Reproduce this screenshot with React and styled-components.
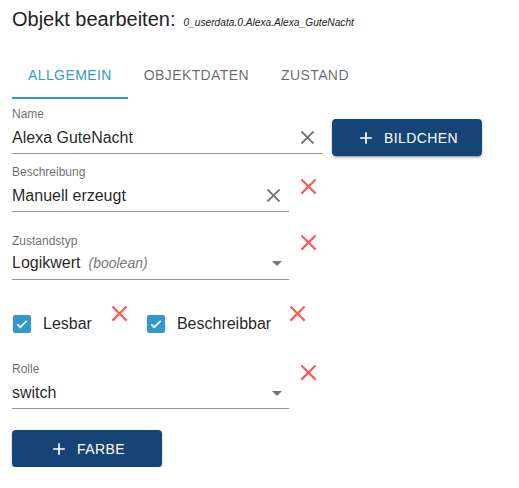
import React from 'react';
import styled, { createGlobalStyle } from 'styled-components';

const GlobalStyle = createGlobalStyle`
    html, body {
        margin: 0;
        padding: 0;
        background: #fff;
    }
    body {
        font-family: "Liberation Sans", Arial, sans-serif;
        color: rgba(0, 0, 0, 0.87);
    }
`;

const Page = styled.div`
    display: flex;
    flex-direction: column;
    padding: 6px 12px 0 12px;
    width: 519px;
    box-sizing: border-box;
`;

const TitleRow = styled.div`
    display: flex;
    align-items: baseline;
    gap: 8px;
    height: 26px;
`;

const Title = styled.h1`
    margin: 0;
    font-size: 20px;
    font-weight: 400;
    line-height: 27px;
    color: #222;
`;

const SubTitle = styled.span`
    font-size: 10.2px;
    font-style: italic;
    color: #222;
`;

const Tabs = styled.div`
    display: flex;
    margin-top: 19px;
    height: 48px;
`;

const Tab = styled.div`
    box-sizing: border-box;
    display: flex;
    align-items: center;
    justify-content: center;
    padding: 0 16px;
    min-width: 90px;
    height: 48px;
    font-size: 14px;
    font-weight: 400;
    letter-spacing: 0.4px;
    text-transform: uppercase;
    color: ${p => (p.$active ? '#3399cc' : 'rgba(0,0,0,0.6)')};
    border-bottom: 2px solid ${p => (p.$active ? '#3399cc' : 'transparent')};
    padding-top: 2px;
`;

const Row = styled.div`
    display: flex;
    align-items: flex-start;
    margin-top: ${p => p.$mt || 0}px;
`;

const Field = styled.div`
    display: flex;
    flex-direction: column;
    width: ${p => p.$width}px;
`;

const Label = styled.label`
    font-size: 12px;
    line-height: 14px;
    color: rgba(0, 0, 0, 0.6);
`;

const InputRow = styled.div`
    display: flex;
    align-items: center;
    margin-top: ${p => p.$gap ?? 7}px;
    padding-bottom: 6px;
    border-bottom: 1px solid #949494;
`;

const Value = styled.div`
    flex: 1;
    font-size: 16px;
    line-height: 19px;
    white-space: nowrap;
`;

const Hint = styled.span`
    margin-left: 8px;
    font-size: 14px;
    font-style: italic;
    color: #777;
`;

const Adornment = styled.span`
    display: flex;
    width: 24px;
    height: 19px;
    align-items: center;
    justify-content: center;
    margin-right: ${p => p.$mr}px;
    color: #777;
`;

const SideIcon = styled.span`
    display: flex;
    width: 27px;
    height: 27px;
    margin-top: ${p => p.$mt || 0}px;
    margin-left: ${p => p.$ml || 5}px;
    color: #ff5a5a;
`;

const Button = styled.button`
    display: flex;
    align-items: center;
    justify-content: center;
    width: 150px;
    height: 37px;
    margin-top: ${p => p.$mt || 0}px;
    margin-left: ${p => p.$ml || 0}px;
    border: none;
    border-radius: 4px;
    background: #164477;
    color: #fff;
    font-family: inherit;
    font-size: 14px;
    font-weight: 400;
    letter-spacing: 0.4px;
    text-transform: uppercase;
    box-shadow: 0px 3px 1px -2px rgba(0,0,0,0.2), 0px 2px 2px 0px rgba(0,0,0,0.14), 0px 1px 5px 0px rgba(0,0,0,0.12);
    cursor: pointer;
    svg {
        margin-right: 8px;
    }
`;

const CheckRow = styled.div`
    display: flex;
    align-items: flex-start;
    margin-top: 20px;
    height: 33px;
`;

const CheckItem = styled.label`
    display: flex;
    align-items: center;
    gap: 12px;
    margin-top: 15px;
    margin-left: ${p => p.$ml || 0}px;
    font-size: 16px;
    line-height: 18px;
`;

const Box = styled.span`
    display: flex;
    align-items: center;
    justify-content: center;
    width: 18px;
    height: 18px;
    border-radius: 2px;
    background: #3399cc;
`;

const closePath = 'M19 6.41 17.59 5 12 10.59 6.41 5 5 6.41 10.59 12 5 17.59 6.41 19 12 13.41 17.59 19 19 17.59 13.41 12z';

const CloseIcon = ({ size = 24 }) => (
    <svg width={size} height={size} viewBox="0 0 24 24" fill="currentColor">
        <path d={closePath} />
    </svg>
);

const ArrowDown = () => (
    <svg width="24" height="24" viewBox="0 0 24 24" fill="currentColor">
        <path d="M7 10l5 5 5-5z" />
    </svg>
);

const PlusIcon = () => (
    <svg width="20" height="20" viewBox="0 0 24 24" fill="currentColor">
        <path d="M19 13h-6v6h-2v-6H5v-2h6V5h2v6h6v2z" />
    </svg>
);

const Checkbox = ({ children, ml }) => (
    <CheckItem $ml={ml}>
        <Box>
            <svg width="14" height="14" viewBox="0 0 24 24" fill="none" stroke="#fff" strokeWidth="3">
                <path d="M4 12.5l5 5L20 6.5" />
            </svg>
        </Box>
        {children}
    </CheckItem>
);

const App = () => {
    return (
        <>
            <GlobalStyle />
            <Page>
                <TitleRow>
                    <Title>Objekt bearbeiten:</Title>
                    <SubTitle>0_userdata.0.Alexa.Alexa_GuteNacht</SubTitle>
                </TitleRow>
                <Tabs>
                    <Tab $active>Allgemein</Tab>
                    <Tab>Objektdaten</Tab>
                    <Tab>Zustand</Tab>
                </Tabs>

                <Row $mt={8}>
                    <Field $width={311}>
                        <Label>Name</Label>
                        <InputRow>
                            <Value>Alexa GuteNacht</Value>
                            <Adornment $mr={4}><CloseIcon size={23} /></Adornment>
                        </InputRow>
                    </Field>
                    <Button $mt={12} $ml={9}><PlusIcon />Bildchen</Button>
                </Row>

                <Row $mt={9}>
                    <Field $width={277}>
                        <Label>Beschreibung</Label>
                        <InputRow>
                            <Value>Manuell erzeugt</Value>
                            <Adornment $mr={4}><CloseIcon size={23} /></Adornment>
                        </InputRow>
                    </Field>
                    <SideIcon $mt={8} $ml={6}><CloseIcon size={27} /></SideIcon>
                </Row>

                <Row $mt={22}>
                    <Field $width={277}>
                        <Label>Zustandstyp</Label>
                        <InputRow $gap={5}>
                            <Value>Logikwert<Hint>(boolean)</Hint></Value>
                            <Adornment $mr={0}><ArrowDown /></Adornment>
                        </InputRow>
                    </Field>
                    <SideIcon $mt={-5} $ml={6}><CloseIcon size={27} /></SideIcon>
                </Row>

                <CheckRow>
                    <Checkbox ml={1}>Lesbar</Checkbox>
                    <SideIcon $ml={14}><CloseIcon size={27} /></SideIcon>
                    <Checkbox ml={14}>Beschreibbar</Checkbox>
                    <SideIcon $ml={13}><CloseIcon size={27} /></SideIcon>
                </CheckRow>

                <Row $mt={29}>
                    <Field $width={277}>
                        <Label>Rolle</Label>
                        <InputRow>
                            <Value>switch</Value>
                            <Adornment $mr={0}><ArrowDown /></Adornment>
                        </InputRow>
                    </Field>
                    <SideIcon $mt={-3} $ml={6}><CloseIcon size={27} /></SideIcon>
                </Row>

                <Row $mt={21}>
                    <Button><PlusIcon />Farbe</Button>
                </Row>
            </Page>
        </>
    );
};

export default App;
